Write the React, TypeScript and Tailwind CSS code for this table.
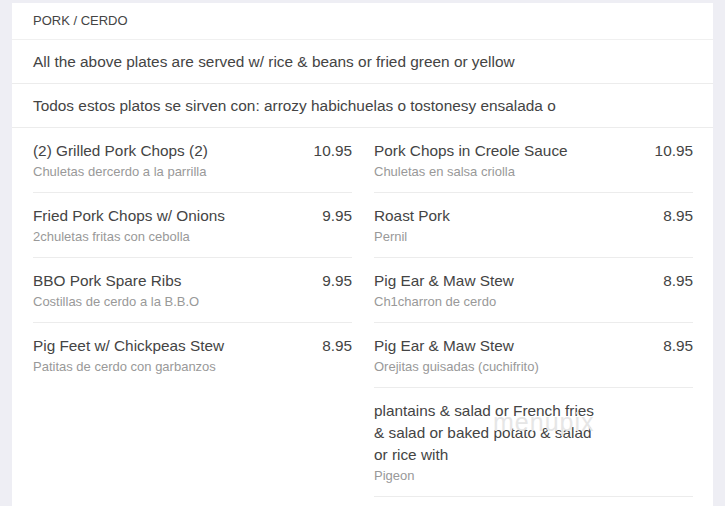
import React from "react";

type Item = { name: string; desc: string; price?: string; last?: boolean };

const left: Item[] = [
  { name: "(2) Grilled Pork Chops (2)", desc: "Chuletas dercerdo a la parrilla", price: "10.95" },
  { name: "Fried Pork Chops w/ Onions", desc: "2chuletas fritas con cebolla", price: "9.95" },
  { name: "BBO Pork Spare Ribs", desc: "Costillas de cerdo a la B.B.O", price: "9.95" },
  { name: "Pig Feet w/ Chickpeas Stew", desc: "Patitas de cerdo con garbanzos", price: "8.95", last: true },
];

const right: Item[] = [
  { name: "Pork Chops in Creole Sauce", desc: "Chuletas en salsa criolla", price: "10.95" },
  { name: "Roast Pork", desc: "Pernil", price: "8.95" },
  { name: "Pig Ear & Maw Stew", desc: "Ch1charron de cerdo", price: "8.95" },
  { name: "Pig Ear & Maw Stew", desc: "Orejitas guisadas (cuchifrito)", price: "8.95" },
  { name: "plantains & salad or French fries & salad or baked potato & salad or rice with", desc: "Pigeon" },
];

function Row({ item }: { item: Item }) {
  return (
    <div className={`flex justify-between pt-[12px] pb-[10px] ${item.last ? "" : "border-b border-[#ececec]"}`}>
      <div className={item.price ? "" : "w-[228px]"}>
        <div className="text-[15.35px] leading-[22px] text-[#444]">{item.name}</div>
        <div className="text-[13px] leading-[20px] text-[#999]">{item.desc}</div>
      </div>
      {item.price && <div className="text-[15.35px] leading-[22px] text-[#444]">{item.price}</div>}
    </div>
  );
}

export default function App() {
  return (
    <div className="min-h-[506px] bg-[#eeeef4] pt-[3px] px-[12px]" style={{ fontFamily: '"Liberation Sans", Arial, sans-serif' }}>
      <div className="bg-white relative min-h-[503px]">
        <div className="px-[21px] pt-[9px] pb-[9px] text-[13px] leading-[18px] text-[#444] uppercase border-b border-[#f0f0f0]">
          PORK / CERDO
        </div>
        <div className="px-[21px] py-[11px] text-[15.4px] leading-[21px] text-[#444] border-b border-[#ececec]">
          All the above plates are served w/ rice &amp; beans or fried green or yellow
        </div>
        <div className="px-[21px] py-[11px] text-[15.4px] leading-[21px] text-[#444] border-b border-[#ececec]">
          Todos estos platos se sirven con: arrozy habichuelas o tostonesy ensalada o
        </div>
        <div className="grid grid-cols-2 gap-x-[22px] px-[21px] pr-[20px]">
          <div className="flex flex-col">
            {left.map((it, i) => (
              <Row key={i} item={it} />
            ))}
          </div>
          <div className="flex flex-col">
            {right.map((it, i) => (
              <Row key={i} item={it} />
            ))}
          </div>
        </div>
        <div className="absolute left-[481px] top-[404px] text-[25px] leading-[30px] text-[#e6e6e6] tracking-[1px] pointer-events-none">
          menupix
        </div>
      </div>
    </div>
  );
}
